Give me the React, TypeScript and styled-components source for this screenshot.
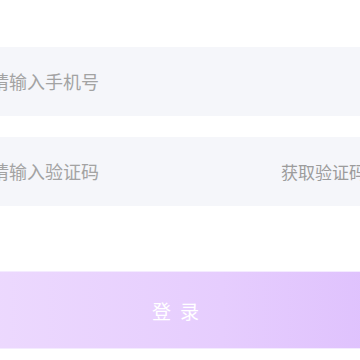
import React from "react";
import styled, { createGlobalStyle } from "styled-components";

const Global = createGlobalStyle`
  html, body { margin: 0; padding: 0; background: #ffffff; overflow: hidden; }
  body { font-family: "Noto Sans CJK SC", "Noto Sans", sans-serif; }
`;

const Page = styled.div`
  width: 360px;
  height: 360px;
  overflow: hidden;
  background: #ffffff;
`;

const Form = styled.div`
  margin: 0 -30px;
  padding-top: 47px;
  display: flex;
  flex-direction: column;
  gap: 21px;
`;

const Field = styled.div`
  height: 69px;
  background: #f5f6fa;
  display: flex;
  align-items: center;
  justify-content: space-between;
  padding: 0 24px 0 21px;
`;

const Input = styled.input`
  flex: 1;
  min-width: 0;
  border: none;
  outline: none;
  background: transparent;
  font-family: inherit;
  font-size: 18px;
  line-height: 24px;
  color: #333;
  padding: 0;
  margin-top: -2px;
  &::placeholder { color: #a3a3a3; }
`;

const CodeLink = styled.span`
  font-size: 17px;
  color: #9c9c9c;
  white-space: nowrap;
`;

const LoginButton = styled.button`
  margin-top: 44px;
  height: 78px;
  border: none;
  border-top: 1px solid #f4ebff;
  border-bottom: 1px solid #f4ebff;
  background: linear-gradient(90deg, #eddafe 0%, #e6cdfe 60%, #dec0fd 100%);
  color: #ffffff;
  font-family: inherit;
  font-size: 19px;
  letter-spacing: 9px;
  padding: 0;
  display: flex;
  align-items: center;
  justify-content: center;
`;

export default function App() {
  return (
    <Page>
      <Global />
      <Form>
        <Field>
          <Input placeholder="请输入手机号" />
        </Field>
        <Field>
          <Input placeholder="请输入验证码" />
          <CodeLink>获取验证码</CodeLink>
        </Field>
        <LoginButton>登录</LoginButton>
      </Form>
    </Page>
  );
}
